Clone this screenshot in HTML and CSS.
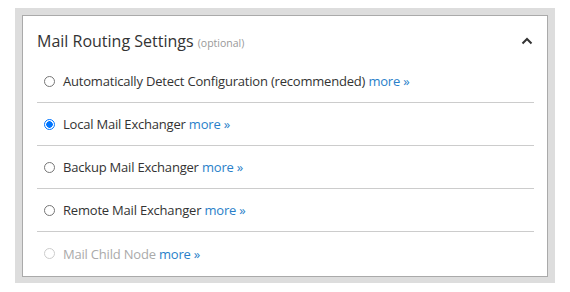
FILE: index.html
```html
<!DOCTYPE html>
<html>
<head>
    <title>Mail Routing Settings</title>
    <link rel="stylesheet" href="styles.css">
</head>
<body>
    <div class="frame">
        <div class="panel">
            <div class="panel-header">
                <h2>Mail Routing Settings <span class="hint">(optional)</span></h2>
                <svg class="chevron" width="12" height="8" viewBox="0 0 12 8">
                    <path d="M1.5 6.5 L6 2 L10.5 6.5" fill="none" stroke="#333" stroke-width="2"/>
                </svg>
            </div>

            <label class="option">
                <input type="radio" name="routing">
                <span>Automatically Detect Configuration (recommended) <a href="#">more »</a></span>
            </label>
            <label class="option">
                <input type="radio" name="routing" checked>
                <span>Local Mail Exchanger <a href="#">more »</a></span>
            </label>
            <label class="option">
                <input type="radio" name="routing">
                <span>Backup Mail Exchanger <a href="#">more »</a></span>
            </label>
            <label class="option">
                <input type="radio" name="routing">
                <span>Remote Mail Exchanger <a href="#">more »</a></span>
            </label>
            <label class="option disabled">
                <input type="radio" name="routing" disabled>
                <span>Mail Child Node <a href="#">more »</a></span>
            </label>
        </div>
    </div>
</body>
</html>
```

FILE: styles.css
```css
* {
    margin: 0px;
    padding: 0px;
    box-sizing: border-box;
    font-family: 'Open Sans', sans-serif;
}

body {
    background-color: #ffffff;
    color: #333333;
}

.frame {
    background-color: #dddddd;
    margin: 8px 15px 0 15px;
    padding: 7px 7px 6px 7px;
}

.panel {
    background-color: #ffffff;
    border: 1px solid #aaaaaa;
    padding: 0 13px 1px 14px;
}

.panel-header {
    display: flex;
    align-items: center;
    justify-content: space-between;
    height: 44px;
    padding-top: 6px;
}

.panel-header h2 {
    font-size: 16px;
    font-weight: normal;
    color: #333333;
}

.hint {
    font-size: 10.5px;
    color: #999999;
}

.chevron {
    margin-right: 1px;
}

.option {
    display: flex;
    align-items: center;
    height: 43px;
    font-size: 13px;
    letter-spacing: -0.2px;
    color: #333333;
    border-bottom: 1px solid #cccccc;
}

.option:last-child {
    border-bottom: none;
}

.option input {
    appearance: none;
    flex: none;
    width: 11px;
    height: 11px;
    border: 1px solid #767676;
    border-radius: 50%;
    margin: 0 8px 0 7px;
    background-color: #ffffff;
}

.option input:checked {
    border-color: #0075ff;
    background: radial-gradient(circle, #0075ff 0 3px, #ffffff 3.5px);
}

.option a {
    color: #2a7fc9;
    text-decoration: none;
}

.disabled {
    color: #aaaaaa;
}

.disabled input {
    border-color: #cccccc;
}
```
